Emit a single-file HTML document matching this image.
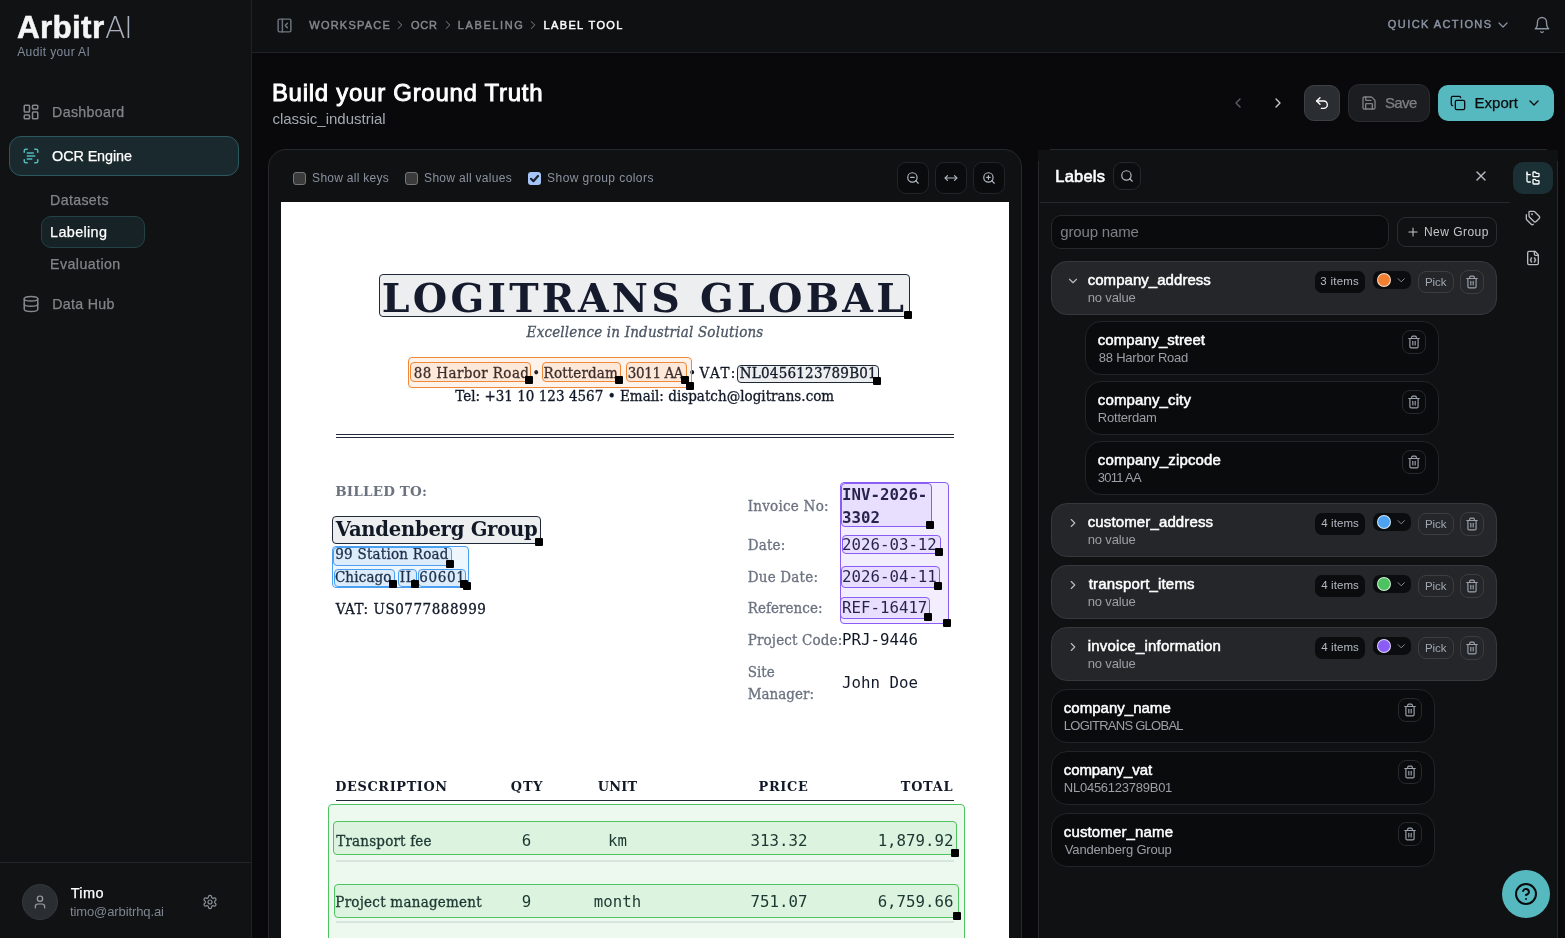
<!DOCTYPE html>
<html lang="en">
<head>
<meta charset="utf-8">
<title>ArbitrAI - Label Tool</title>
<style>
*{box-sizing:border-box;margin:0;padding:0}
html,body{width:1565px;height:938px;overflow:hidden;background:#09090b;color:#fff;font-family:"Liberation Sans",sans-serif;font-size:15px;-webkit-font-smoothing:antialiased}
#app{position:absolute;left:0;top:0;width:1565px;height:938px;overflow:hidden;will-change:transform}
.abs{position:absolute}
svg.i{position:absolute;fill:none;stroke:currentColor;stroke-width:2;stroke-linecap:round;stroke-linejoin:round}
.t{position:absolute;white-space:nowrap;line-height:1}
/* sidebar */
#sidebar{position:absolute;left:0;top:0;width:252px;height:938px;background:#111214;border-right:1px solid #202226}
#topbar{position:absolute;left:252px;top:0;width:1313px;height:53px;background:#0f1012;border-bottom:1px solid #202226}
#main{position:absolute;left:252px;top:53px;width:1313px;height:885px;background:#09090b}
.pill{position:absolute;border:1px solid #2a5a5e;background:#1a292d;border-radius:12px}
/* doc */
#docpanel{position:absolute;left:268px;top:149px;width:754px;height:820px;background:#101113;border:1px solid #26282c;border-radius:18px}
#page{position:absolute;left:281px;top:202px;width:728px;height:736px;background:#fff;color:#111827;font-family:"Liberation Serif",serif;overflow:hidden}
.box{position:absolute;border:1px solid;border-radius:4px;z-index:2}
.h{position:absolute;width:8px;height:8px;background:#000;border-radius:1px;z-index:3}
.mono{font-family:"DejaVu Sans Mono","Liberation Mono",monospace;font-size:16px}
/* labels */
#labels{position:absolute;left:1038px;top:150px;width:520px;height:820px;background:#101113}
.g{position:absolute;left:1051px;width:446px;height:54px;background:#242629;border:1px solid #36383c;border-radius:16px}
.it{position:absolute;height:54px;background:#0a0b0d;border:1px solid #222428;border-radius:16px}
.badge{position:absolute;background:#0b0c0e;border-radius:7px;color:#b4b7bc;font-size:12px;text-align:center}
.btn{position:absolute;border:1px solid #3a3d42;border-radius:8px;color:#a9acb1}
.it .btn{border-color:#26282c}
</style>
</head>
<body>
<div id="app">
<aside>
<div id="sidebar"></div>
<div class="t" style="left:16.90px;top:8.80px;font-size:31.5px;line-height:37.80px;color:#f5f5f5;font-weight:700;letter-spacing:0.300px;-webkit-text-stroke:0.5px currentColor;">Arbitr</div>
<div class="t" style="left:104.90px;top:10.20px;font-size:30px;line-height:36.00px;color:#aab2c0;font-weight:200;font-family:'DejaVu Sans',sans-serif;letter-spacing:-1.500px;">AI</div>
<div class="t" style="left:17.20px;top:44.80px;font-size:12px;line-height:14.40px;color:#808a9a;font-weight:400;letter-spacing:0.383px;">Audit your AI</div>
<svg class="i" viewBox="0 0 24 24" width="18" height="18" style="left:22.0px;top:103.0px;color:#85878b;stroke-width:2"><rect width="7" height="9" x="3" y="3" rx="1"/><rect width="7" height="5" x="14" y="3" rx="1"/><rect width="7" height="9" x="14" y="12" rx="1"/><rect width="7" height="5" x="3" y="16" rx="1"/></svg>
<div class="t" style="left:52.10px;top:103.68px;font-size:14.2px;line-height:17.04px;color:#828487;font-weight:400;letter-spacing:0.337px;-webkit-text-stroke:0.25px currentColor;">Dashboard</div>
<div class="pill" style="left:9px;top:136px;width:230px;height:40px"></div>
<svg class="i" viewBox="0 0 24 24" width="18" height="18" style="left:22.0px;top:147.0px;color:#4fb9bd;stroke-width:2"><path d="M3 7V5a2 2 0 0 1 2-2h2"/><path d="M17 3h2a2 2 0 0 1 2 2v2"/><path d="M21 17v2a2 2 0 0 1-2 2h-2"/><path d="M7 21H5a2 2 0 0 1-2-2v-2"/><path d="M7 8h8"/><path d="M7 12h10"/><path d="M7 16h6"/></svg>
<div class="t" style="left:52.10px;top:147.56px;font-size:14.4px;line-height:17.28px;color:#fff;font-weight:400;letter-spacing:-0.111px;-webkit-text-stroke:0.25px currentColor;">OCR Engine</div>
<div class="t" style="left:50.10px;top:191.68px;font-size:14.2px;line-height:17.04px;color:#828487;font-weight:400;letter-spacing:0.343px;-webkit-text-stroke:0.25px currentColor;">Datasets</div>
<div class="pill" style="left:41px;top:216px;width:104px;height:32px;border-radius:10px;background:#162226;border-color:#234347"></div>
<div class="t" style="left:50.10px;top:223.56px;font-size:14.4px;line-height:17.28px;color:#fff;font-weight:400;letter-spacing:0.343px;-webkit-text-stroke:0.25px currentColor;">Labeling</div>
<div class="t" style="left:50.10px;top:255.68px;font-size:14.2px;line-height:17.04px;color:#828487;font-weight:400;letter-spacing:0.433px;-webkit-text-stroke:0.25px currentColor;">Evaluation</div>
<svg class="i" viewBox="0 0 24 24" width="18" height="18" style="left:22.0px;top:295.0px;color:#85878b;stroke-width:2"><ellipse cx="12" cy="5" rx="9" ry="3"/><path d="M3 5V19A9 3 0 0 0 21 19V5"/><path d="M3 12A9 3 0 0 0 21 12"/></svg>
<div class="t" style="left:52.20px;top:295.68px;font-size:14.2px;line-height:17.04px;color:#828487;font-weight:400;letter-spacing:0.314px;-webkit-text-stroke:0.25px currentColor;">Data Hub</div>
<div class="abs" style="left:0;top:862px;width:251px;height:1px;background:#232529"></div>
<div class="abs" style="left:22px;top:884px;width:36px;height:36px;border-radius:50%;background:#2a2d31;border:1px solid #35383d"></div>
<svg class="i" viewBox="0 0 24 24" width="16" height="16" style="left:32.0px;top:894.0px;color:#9da0a5;stroke-width:1.8"><path d="M19 21v-2a4 4 0 0 0-4-4H9a4 4 0 0 0-4 4v2"/><circle cx="12" cy="7" r="4"/></svg>
<div class="t" style="left:70.70px;top:885.30px;font-size:14.5px;line-height:17.40px;color:#fff;font-weight:400;letter-spacing:0.367px;-webkit-text-stroke:0.25px currentColor;">Timo</div>
<div class="t" style="left:69.90px;top:904.20px;font-size:13px;line-height:15.60px;color:#7d8592;font-weight:400;letter-spacing:-0.100px;">timo@arbitrhq.ai</div>
<svg class="i" viewBox="0 0 24 24" width="16" height="16" style="left:202.0px;top:894.0px;color:#8a8f98;stroke-width:1.8"><path d="M12.22 2h-.44a2 2 0 0 0-2 2v.18a2 2 0 0 1-1 1.73l-.43.25a2 2 0 0 1-2 0l-.15-.08a2 2 0 0 0-2.73.73l-.22.38a2 2 0 0 0 .73 2.73l.15.1a2 2 0 0 1 1 1.72v.51a2 2 0 0 1-1 1.74l-.15.09a2 2 0 0 0-.73 2.73l.22.38a2 2 0 0 0 2.73.73l.15-.08a2 2 0 0 1 2 0l.43.25a2 2 0 0 1 1 1.73V20a2 2 0 0 0 2 2h.44a2 2 0 0 0 2-2v-.18a2 2 0 0 1 1-1.73l.43-.25a2 2 0 0 1 2 0l.15.08a2 2 0 0 0 2.73-.73l.22-.39a2 2 0 0 0-.73-2.73l-.15-.08a2 2 0 0 1-1-1.74v-.5a2 2 0 0 1 1-1.74l.15-.09a2 2 0 0 0 .73-2.73l-.22-.38a2 2 0 0 0-2.73-.73l-.15.08a2 2 0 0 1-2 0l-.43-.25a2 2 0 0 1-1-1.73V4a2 2 0 0 0-2-2z"/><circle cx="12" cy="12" r="3"/></svg>
</aside>
<header>
<div id="topbar"></div>
<svg class="i" viewBox="0 0 24 24" width="17" height="17" style="left:275.5px;top:16.5px;color:#6f7680;stroke-width:2"><rect width="18" height="18" x="3" y="3" rx="2"/><path d="M9 3v18"/><path d="m16 15-3-3 3-3"/></svg>
<div class="t" style="left:309.30px;top:19.10px;font-size:11px;line-height:13.20px;color:#85878b;font-weight:400;letter-spacing:1.225px;-webkit-text-stroke:0.45px currentColor;">WORKSPACE</div>
<svg class="i" viewBox="0 0 24 24" width="14" height="14" style="left:393.3px;top:18.2px;color:#6b6e73;stroke-width:1.8"><path d="m9 18 6-6-6-6"/></svg>
<div class="t" style="left:411.00px;top:19.10px;font-size:11px;line-height:13.20px;color:#85878b;font-weight:400;letter-spacing:0.700px;-webkit-text-stroke:0.45px currentColor;">OCR</div>
<svg class="i" viewBox="0 0 24 24" width="14" height="14" style="left:441.3px;top:18.2px;color:#6b6e73;stroke-width:1.8"><path d="m9 18 6-6-6-6"/></svg>
<div class="t" style="left:457.80px;top:19.10px;font-size:11px;line-height:13.20px;color:#85878b;font-weight:400;letter-spacing:1.600px;-webkit-text-stroke:0.45px currentColor;">LABELING</div>
<svg class="i" viewBox="0 0 24 24" width="14" height="14" style="left:526.2px;top:18.2px;color:#6b6e73;stroke-width:1.8"><path d="m9 18 6-6-6-6"/></svg>
<div class="t" style="left:543.40px;top:19.10px;font-size:11px;line-height:13.20px;color:#fff;font-weight:400;letter-spacing:1.400px;-webkit-text-stroke:0.45px currentColor;">LABEL TOOL</div>
<div class="t" style="left:1387.80px;top:18.00px;font-size:11px;line-height:13.20px;color:#8a93a2;font-weight:400;letter-spacing:1.425px;-webkit-text-stroke:0.45px currentColor;">QUICK ACTIONS</div>
<svg class="i" viewBox="0 0 24 24" width="16" height="16" style="left:1495.0px;top:16.5px;color:#8a93a2;stroke-width:1.8"><path d="m6 9 6 6 6-6"/></svg>
<svg class="i" viewBox="0 0 24 24" width="18" height="18" style="left:1533.0px;top:16.0px;color:#8a93a2;stroke-width:1.8"><path d="M6 8a6 6 0 0 1 12 0c0 7 3 9 3 9H3s3-2 3-9"/><path d="M10.3 21a1.94 1.94 0 0 0 3.4 0"/></svg>
</header>
<main>
<div id="main"></div>
<section>
<div class="t" style="left:271.90px;top:78.70px;font-size:24px;line-height:28.80px;color:#fff;font-weight:400;letter-spacing:0.723px;-webkit-text-stroke:0.9px currentColor;">Build your Ground Truth</div>
<div class="t" style="left:272.40px;top:110.30px;font-size:15px;line-height:18.00px;color:#a3a9b2;font-weight:400;letter-spacing:-0.006px;">classic_industrial</div>
<svg class="i" viewBox="0 0 24 24" width="16" height="16" style="left:1230.0px;top:95.0px;color:#5d6066;stroke-width:2"><path d="m15 18-6-6 6-6"/></svg>
<svg class="i" viewBox="0 0 24 24" width="16" height="16" style="left:1269.7px;top:95.0px;color:#c9cbce;stroke-width:2"><path d="m9 18 6-6-6-6"/></svg>
<div class="abs" style="left:1304px;top:85px;width:36px;height:36px;border-radius:10px;background:#2a2d31;border:1px solid #3d4045"></div>
<svg class="i" viewBox="0 0 24 24" width="16" height="16" style="left:1314.0px;top:95.0px;color:#fff;stroke-width:2"><path d="M9 14 4 9l5-5"/><path d="M4 9h10.5a5.5 5.5 0 0 1 5.5 5.5a5.5 5.5 0 0 1-5.5 5.5H11"/></svg>
<div class="abs" style="left:1348px;top:84px;width:82px;height:38px;border-radius:11px;background:#1b1d20;border:1px solid #2a2c30"></div>
<svg class="i" viewBox="0 0 24 24" width="16" height="16" style="left:1361.0px;top:95.0px;color:#7d8085;stroke-width:2"><path d="M15.2 3a2 2 0 0 1 1.4.6l3.8 3.8a2 2 0 0 1 .6 1.4V19a2 2 0 0 1-2 2H5a2 2 0 0 1-2-2V5a2 2 0 0 1 2-2z"/><path d="M17 21v-7a1 1 0 0 0-1-1H8a1 1 0 0 0-1 1v7"/><path d="M7 3v4a1 1 0 0 0 1 1h7"/></svg>
<div class="t" style="left:1384.90px;top:94.00px;font-size:15px;line-height:18.00px;color:#7d8085;font-weight:400;letter-spacing:-0.567px;-webkit-text-stroke:0.25px currentColor;">Save</div>
<div class="abs" style="left:1438px;top:85px;width:116px;height:36px;border-radius:10px;background:#57b9c0"></div>
<svg class="i" viewBox="0 0 24 24" width="16" height="16" style="left:1450.0px;top:95.0px;color:#0a0b0d;stroke-width:2"><rect width="14" height="14" x="8" y="8" rx="2" ry="2"/><path d="M4 16c-1.1 0-2-.9-2-2V4c0-1.1.9-2 2-2h10c1.1 0 2 .9 2 2"/></svg>
<div class="t" style="left:1474.50px;top:94.00px;font-size:15px;line-height:18.00px;color:#0a0b0d;font-weight:400;letter-spacing:0.020px;-webkit-text-stroke:0.25px currentColor;">Export</div>
<svg class="i" viewBox="0 0 24 24" width="16" height="16" style="left:1526.2px;top:95.0px;color:#0a0b0d;stroke-width:2"><path d="m6 9 6 6 6-6"/></svg>
<div class="abs" style="left:1502px;top:870px;width:48px;height:48px;border-radius:50%;background:#57b9c0;z-index:50"></div>
<svg class="i" viewBox="0 0 24 24" width="24" height="24" style="left:1514.0px;top:882.0px;color:#0a0b0d;stroke-width:2;z-index:51"><circle cx="12" cy="12" r="10"/><path d="M9.09 9a3 3 0 0 1 5.83 1c0 2-3 3-3 3"/><path d="M12 17h.01"/></svg>
</section>
<section>
<div id="docpanel"></div>
<div class="abs" style="left:293px;top:172px;width:13px;height:13px;border-radius:3px;background:#3b3b3b;border:1px solid #767676"></div>
<div class="t" style="left:312.10px;top:170.80px;font-size:12px;line-height:14.40px;color:#8a92a0;font-weight:400;letter-spacing:0.283px;">Show all keys</div>
<div class="abs" style="left:405px;top:172px;width:13px;height:13px;border-radius:3px;background:#3b3b3b;border:1px solid #767676"></div>
<div class="t" style="left:424.10px;top:170.80px;font-size:12px;line-height:14.40px;color:#8a92a0;font-weight:400;letter-spacing:0.300px;">Show all values</div>
<div class="abs" style="left:528px;top:172px;width:13px;height:13px;border-radius:3px;background:#a6c5f7"></div>
<svg class="i" viewBox="0 0 13 13" width="13" height="13" style="left:528px;top:172px;color:#1b2230;stroke-width:2.2"><path d="M3 6.8l2.4 2.4L10 4"/></svg>
<div class="t" style="left:547.10px;top:170.80px;font-size:12px;line-height:14.40px;color:#8a92a0;font-weight:400;letter-spacing:0.431px;">Show group colors</div>
<div class="abs" style="left:897px;top:162px;width:32px;height:32px;border-radius:9px;background:#0a0b0d;border:1px solid #222428"></div>
<svg class="i" viewBox="0 0 24 24" width="14" height="14" style="left:906.0px;top:171.0px;color:#b4bac4;stroke-width:2"><circle cx="11" cy="11" r="8"/><path d="M21 21l-4.35-4.35"/><path d="M8 11h6"/></svg>
<div class="abs" style="left:935px;top:162px;width:32px;height:32px;border-radius:9px;background:#0a0b0d;border:1px solid #222428"></div>
<svg class="i" viewBox="0 0 24 24" width="14" height="14" style="left:944.0px;top:171.0px;color:#b4bac4;stroke-width:2"><path d="m18 8 4 4-4 4"/><path d="M2 12h20"/><path d="m6 8-4 4 4 4"/></svg>
<div class="abs" style="left:973px;top:162px;width:32px;height:32px;border-radius:9px;background:#0a0b0d;border:1px solid #222428"></div>
<svg class="i" viewBox="0 0 24 24" width="14" height="14" style="left:982.0px;top:171.0px;color:#b4bac4;stroke-width:2"><circle cx="11" cy="11" r="8"/><path d="M21 21l-4.35-4.35"/><path d="M8 11h6"/><path d="M11 8v6"/></svg>
<div id="page"></div>
<div class="box" style="left:379px;top:274px;width:531px;height:43px;border-color:#1f2937;background:rgba(31,41,55,0.08);border-radius:4px;"></div>
<div class="t" style="left:381.80px;top:274.50px;font-size:39.5px;line-height:47.40px;color:#151a2d;font-weight:700;font-family:'DejaVu Serif',serif;letter-spacing:3.253px;">LOGITRANS GLOBAL</div>
<div class="h" style="left:904px;top:311px"></div>
<div class="t" style="left:526.60px;top:323.00px;font-size:15px;line-height:18.00px;color:#4b5563;font-weight:400;font-style:italic;font-family:'DejaVu Serif Condensed',serif;letter-spacing:0.191px;-webkit-text-stroke:0.3px currentColor;">Excellence in Industrial Solutions</div>
<div class="box" style="left:408px;top:357px;width:284px;height:31px;border-color:#f0883a;background:rgba(245,137,59,0.1);border-radius:4px;"></div>
<div class="box" style="left:410px;top:362px;width:121px;height:20px;border-color:#f0883a;background:rgba(245,137,59,0.1);border-radius:4px;"></div>
<div class="box" style="left:542px;top:362px;width:79px;height:20px;border-color:#f0883a;background:rgba(245,137,59,0.1);border-radius:4px;"></div>
<div class="box" style="left:626px;top:362px;width:61px;height:20px;border-color:#f0883a;background:rgba(245,137,59,0.1);border-radius:4px;"></div>
<div class="t" style="left:413.70px;top:364.00px;font-size:15px;line-height:18.00px;color:#111827;font-weight:400;font-family:'DejaVu Serif Condensed',serif;letter-spacing:0.392px;-webkit-text-stroke:0.3px currentColor;">88 Harbor Road</div>
<div class="t " style="left:536.2px;transform:translateX(-50%);top:364.00px;font-size:15px;line-height:18.00px;color:#111827;font-weight:400;font-family:'DejaVu Serif Condensed',serif">&bull;</div>
<div class="t" style="left:543.60px;top:364.00px;font-size:15px;line-height:18.00px;color:#111827;font-weight:400;font-family:'DejaVu Serif Condensed',serif;letter-spacing:0.150px;-webkit-text-stroke:0.3px currentColor;">Rotterdam</div>
<div class="t" style="left:627.80px;top:364.00px;font-size:15px;line-height:18.00px;color:#111827;font-weight:400;font-family:'DejaVu Serif Condensed',serif;letter-spacing:-0.383px;-webkit-text-stroke:0.3px currentColor;">3011 AA</div>
<div class="t " style="left:692.3px;transform:translateX(-50%);top:364.00px;font-size:15px;line-height:18.00px;color:#111827;font-weight:400;font-family:'DejaVu Serif Condensed',serif">&bull;</div>
<div class="t" style="left:699.60px;top:364.00px;font-size:15px;line-height:18.00px;color:#111827;font-weight:400;font-family:'DejaVu Serif Condensed',serif;letter-spacing:1.667px;-webkit-text-stroke:0.3px currentColor;">VAT:</div>
<div class="box" style="left:737px;top:365px;width:142px;height:18px;border-color:#1f2937;background:rgba(31,41,55,0.08);border-radius:4px;"></div>
<div class="t" style="left:739.80px;top:364.00px;font-size:15px;line-height:18.00px;color:#111827;font-weight:400;font-family:'DejaVu Serif Condensed',serif;letter-spacing:0.229px;-webkit-text-stroke:0.3px currentColor;">NL0456123789B01</div>
<div class="h" style="left:525px;top:376px"></div>
<div class="h" style="left:615px;top:376px"></div>
<div class="h" style="left:681px;top:376px"></div>
<div class="h" style="left:686px;top:382px"></div>
<div class="h" style="left:873px;top:377px"></div>
<div class="t" style="left:455.30px;top:387.00px;font-size:15px;line-height:18.00px;color:#111827;font-weight:400;font-family:'DejaVu Serif Condensed',serif;letter-spacing:0.024px;-webkit-text-stroke:0.3px currentColor;">Tel: +31 10 123 4567 &bull; Email: dispatch@logitrans.com</div>
<div class="abs" style="left:335.5px;top:434px;width:618px;height:4px;border-top:1.5px solid #1f2937;border-bottom:1.5px solid #1f2937"></div>
<div class="t" style="left:335.30px;top:482.90px;font-size:13.5px;line-height:16.20px;color:#6b7280;font-weight:700;font-family:'DejaVu Serif',serif;letter-spacing:0.167px;">BILLED TO:</div>
<div class="box" style="left:332px;top:516px;width:209px;height:28px;border-color:#1f2937;background:rgba(31,41,55,0.08);border-radius:4px;"></div>
<div class="t" style="left:335.80px;top:517.64px;font-size:19.6px;line-height:23.52px;color:#111827;font-weight:700;font-family:'DejaVu Serif',serif;letter-spacing:-0.267px;">Vandenberg Group</div>
<div class="h" style="left:535px;top:538px"></div>
<div class="box" style="left:332px;top:546px;width:137px;height:42px;border-color:#4a9ff0;background:rgba(74,159,240,0.1);border-radius:4px;"></div>
<div class="box" style="left:333px;top:547px;width:119px;height:19px;border-color:#4a9ff0;background:rgba(74,159,240,0.1);border-radius:4px;"></div>
<div class="t" style="left:335.30px;top:545.40px;font-size:15px;line-height:18.00px;color:#111827;font-weight:400;font-family:'DejaVu Serif Condensed',serif;letter-spacing:0.229px;-webkit-text-stroke:0.3px currentColor;">99 Station Road</div>
<div class="box" style="left:334px;top:569px;width:61px;height:18px;border-color:#4a9ff0;background:rgba(74,159,240,0.1);border-radius:4px;"></div>
<div class="t" style="left:334.90px;top:568.00px;font-size:15px;line-height:18.00px;color:#111827;font-weight:400;font-family:'DejaVu Serif Condensed',serif;letter-spacing:0.150px;-webkit-text-stroke:0.3px currentColor;">Chicago</div>
<div class="box" style="left:398px;top:569px;width:19px;height:18px;border-color:#4a9ff0;background:rgba(74,159,240,0.1);border-radius:4px;"></div>
<div class="t" style="left:399.80px;top:568.00px;font-size:15px;line-height:18.00px;color:#111827;font-weight:400;font-family:'DejaVu Serif Condensed',serif;letter-spacing:0.700px;-webkit-text-stroke:0.3px currentColor;">IL</div>
<div class="box" style="left:418px;top:569px;width:48px;height:18px;border-color:#4a9ff0;background:rgba(74,159,240,0.1);border-radius:4px;"></div>
<div class="t" style="left:419.30px;top:568.00px;font-size:15px;line-height:18.00px;color:#111827;font-weight:400;font-family:'DejaVu Serif Condensed',serif;letter-spacing:0.675px;-webkit-text-stroke:0.3px currentColor;">60601</div>
<div class="h" style="left:446px;top:560px"></div>
<div class="h" style="left:389px;top:580px"></div>
<div class="h" style="left:411px;top:580px"></div>
<div class="h" style="left:460px;top:580px"></div>
<div class="h" style="left:463px;top:582px"></div>
<div class="t" style="left:335.80px;top:600.00px;font-size:15px;line-height:18.00px;color:#111827;font-weight:400;font-family:'DejaVu Serif Condensed',serif;letter-spacing:0.544px;-webkit-text-stroke:0.3px currentColor;">VAT: US0777888999</div>
<div class="box" style="left:840px;top:482px;width:109px;height:142px;border-color:#8b5cf6;background:rgba(139,92,246,0.1);border-radius:4px;"></div>
<div class="box" style="left:841px;top:483px;width:91px;height:44px;border-color:#8b5cf6;background:rgba(139,92,246,0.1);border-radius:4px;"></div>
<div class="box" style="left:842px;top:535px;width:99px;height:19px;border-color:#8b5cf6;background:rgba(139,92,246,0.1);border-radius:4px;"></div>
<div class="box" style="left:841px;top:566px;width:99px;height:22px;border-color:#8b5cf6;background:rgba(139,92,246,0.1);border-radius:4px;"></div>
<div class="box" style="left:840px;top:597px;width:90px;height:22px;border-color:#8b5cf6;background:rgba(139,92,246,0.1);border-radius:4px;"></div>
<div class="t" style="left:747.70px;top:497.00px;font-size:15px;line-height:18.00px;color:#6b7280;font-weight:400;font-family:'DejaVu Serif Condensed',serif;letter-spacing:0.250px;-webkit-text-stroke:0.3px currentColor;">Invoice No:</div>
<div class="t" style="left:747.70px;top:536.00px;font-size:15px;line-height:18.00px;color:#6b7280;font-weight:400;font-family:'DejaVu Serif Condensed',serif;letter-spacing:0.175px;-webkit-text-stroke:0.3px currentColor;">Date:</div>
<div class="t" style="left:747.70px;top:568.00px;font-size:15px;line-height:18.00px;color:#6b7280;font-weight:400;font-family:'DejaVu Serif Condensed',serif;letter-spacing:0.213px;-webkit-text-stroke:0.3px currentColor;">Due Date:</div>
<div class="t" style="left:747.70px;top:599.00px;font-size:15px;line-height:18.00px;color:#6b7280;font-weight:400;font-family:'DejaVu Serif Condensed',serif;letter-spacing:0.056px;-webkit-text-stroke:0.3px currentColor;">Reference:</div>
<div class="t" style="left:747.70px;top:631.00px;font-size:15px;line-height:18.00px;color:#6b7280;font-weight:400;font-family:'DejaVu Serif Condensed',serif;letter-spacing:0.158px;-webkit-text-stroke:0.3px currentColor;">Project Code:</div>
<div class="t mono" style="left:842px;top:484.05px;width:90px;white-space:normal;font-size:15.75px;line-height:22.9px;color:#111827;font-weight:700">INV-2026-3302</div>
<div class="t" style="left:747.7px;top:660.9px;width:70px;white-space:normal;font-size:15px;line-height:22.4px;color:#6b7280;font-family:'DejaVu Serif Condensed',serif;letter-spacing:0.02px;-webkit-text-stroke:0.3px currentColor">Site Manager:</div>
<div class="t mono" style="left:842px;top:535.55px;font-size:15.75px;line-height:18.90px;color:#111827;font-weight:400;">2026-03-12</div>
<div class="t mono" style="left:842px;top:567.55px;font-size:15.75px;line-height:18.90px;color:#111827;font-weight:400;">2026-04-11</div>
<div class="t mono" style="left:842px;top:598.55px;font-size:15.75px;line-height:18.90px;color:#111827;font-weight:400;">REF-16417</div>
<div class="t mono" style="left:842px;top:630.55px;font-size:15.75px;line-height:18.90px;color:#111827;font-weight:400;">PRJ-9446</div>
<div class="t mono" style="left:842px;top:673.55px;font-size:15.75px;line-height:18.90px;color:#111827;font-weight:400;">John Doe</div>
<div class="h" style="left:926px;top:521px"></div>
<div class="h" style="left:935px;top:548px"></div>
<div class="h" style="left:934px;top:582px"></div>
<div class="h" style="left:924px;top:613px"></div>
<div class="h" style="left:943px;top:618.5px"></div>
<div class="t" style="left:335.30px;top:779.26px;font-size:12.9px;line-height:15.48px;color:#111827;font-weight:700;font-family:'DejaVu Serif',serif;letter-spacing:0.620px;">DESCRIPTION</div>
<div class="t" style="left:510.80px;top:779.26px;font-size:12.9px;line-height:15.48px;color:#111827;font-weight:700;font-family:'DejaVu Serif',serif;letter-spacing:0.850px;">QTY</div>
<div class="t" style="left:597.80px;top:779.26px;font-size:12.9px;line-height:15.48px;color:#111827;font-weight:700;font-family:'DejaVu Serif',serif;letter-spacing:0.233px;">UNIT</div>
<div class="t" style="left:758.50px;top:779.26px;font-size:12.9px;line-height:15.48px;color:#111827;font-weight:700;font-family:'DejaVu Serif',serif;letter-spacing:0.700px;">PRICE</div>
<div class="t" style="left:900.80px;top:779.26px;font-size:12.9px;line-height:15.48px;color:#111827;font-weight:700;font-family:'DejaVu Serif',serif;letter-spacing:0.750px;">TOTAL</div>
<div class="abs" style="left:335.5px;top:800px;width:618px;height:1px;background:#1f2937"></div>
<div class="box" style="left:328px;top:804px;width:637px;height:156px;border-color:#4fc35f;background:rgba(79,195,95,0.1);border-radius:4px;"></div>
<div class="abs" style="left:335.5px;top:860px;width:618px;height:1.5px;background:#e6e9ec"></div>
<div class="abs" style="left:335.5px;top:921px;width:618px;height:1.5px;background:#e6e9ec"></div>
<div class="box" style="left:333px;top:821px;width:624px;height:34px;border-color:#4fc35f;background:rgba(79,195,95,0.1);border-radius:4px;"></div>
<div class="box" style="left:334px;top:884px;width:625px;height:34px;border-color:#4fc35f;background:rgba(79,195,95,0.1);border-radius:4px;"></div>
<div class="t" style="left:336.30px;top:832.00px;font-size:15px;line-height:18.00px;color:#111827;font-weight:400;font-family:'DejaVu Serif Condensed',serif;letter-spacing:0.183px;-webkit-text-stroke:0.3px currentColor;">Transport fee</div>
<div class="t mono" style="left:526.5px;transform:translateX(-50%);top:831.55px;font-size:15.75px;line-height:18.90px;color:#111827;font-weight:400;">6</div>
<div class="t mono" style="left:617.5px;transform:translateX(-50%);top:831.55px;font-size:15.75px;line-height:18.90px;color:#111827;font-weight:400;">km</div>
<div class="t mono" style="right:757.5px;top:831.55px;font-size:15.75px;line-height:18.90px;color:#111827;font-weight:400;">313.32</div>
<div class="t mono" style="right:611.5px;top:831.55px;font-size:15.75px;line-height:18.90px;color:#111827;font-weight:400;">1,879.92</div>
<div class="t" style="left:335.30px;top:893.00px;font-size:15px;line-height:18.00px;color:#111827;font-weight:400;font-family:'DejaVu Serif Condensed',serif;letter-spacing:0.247px;-webkit-text-stroke:0.3px currentColor;">Project management</div>
<div class="t mono" style="left:526.5px;transform:translateX(-50%);top:892.55px;font-size:15.75px;line-height:18.90px;color:#111827;font-weight:400;">9</div>
<div class="t mono" style="left:617.5px;transform:translateX(-50%);top:892.55px;font-size:15.75px;line-height:18.90px;color:#111827;font-weight:400;">month</div>
<div class="t mono" style="right:757.5px;top:892.55px;font-size:15.75px;line-height:18.90px;color:#111827;font-weight:400;">751.07</div>
<div class="t mono" style="right:611.5px;top:892.55px;font-size:15.75px;line-height:18.90px;color:#111827;font-weight:400;">6,759.66</div>
<div class="h" style="left:951px;top:849px"></div>
<div class="h" style="left:953px;top:912px"></div>
</section>
<section>
<div id="labels"></div>
<div class="abs" style="left:1050px;top:149px;width:497px;height:1px;background:#26282c"></div>
<div class="abs" style="left:1038px;top:161px;width:1px;height:800px;background:#26282c"></div>
<div class="abs" style="left:1557px;top:161px;width:1px;height:800px;background:#26282c"></div>
<div class="t" style="left:1055.30px;top:167.20px;font-size:16.5px;line-height:19.80px;color:#fff;font-weight:400;letter-spacing:0.200px;-webkit-text-stroke:0.6px currentColor;">Labels</div>
<div class="abs" style="left:1113px;top:162px;width:28px;height:28px;border-radius:9px;background:#0c0d0f;border:1px solid #26282c"></div>
<svg class="i" viewBox="0 0 24 24" width="14" height="14" style="left:1120.0px;top:169.0px;color:#b4bac4;stroke-width:2"><circle cx="11" cy="11" r="8"/><path d="m21 21-4.3-4.3"/></svg>
<svg class="i" viewBox="0 0 24 24" width="16" height="16" style="left:1473.0px;top:168.0px;color:#b4bac4;stroke-width:2"><path d="M18 6 6 18"/><path d="m6 6 12 12"/></svg>
<div class="abs" style="left:1040px;top:202px;width:470px;height:1px;background:#26282c"></div>
<div class="abs" style="left:1051px;top:215px;width:338px;height:34px;border-radius:10px;background:#0a0b0d;border:1px solid #26282c"></div>
<div class="t" style="left:1060.30px;top:223.00px;font-size:15px;line-height:18.00px;color:#7d8085;font-weight:400;letter-spacing:-0.167px;">group name</div>
<div class="abs" style="left:1397px;top:217px;width:100px;height:30px;border-radius:9px;border:1px solid #2b2d31"></div>
<svg class="i" viewBox="0 0 24 24" width="14" height="14" style="left:1406.0px;top:225.0px;color:#c4c6c9;stroke-width:1.8"><path d="M5 12h14"/><path d="M12 5v14"/></svg>
<div class="t" style="left:1423.90px;top:224.80px;font-size:12px;line-height:14.40px;color:#c4c6c9;font-weight:400;letter-spacing:0.475px;">New Group</div>
<div class="abs" style="left:1513px;top:162px;width:40px;height:32px;border-radius:10px;background:#1b3035"></div>
<svg class="i" viewBox="0 0 24 24" width="16" height="16" style="left:1525.0px;top:170.0px;color:#fff;stroke-width:2"><path d="M20 10a1 1 0 0 0 1-1V6a1 1 0 0 0-1-1h-2.5a1 1 0 0 1-.8-.4l-.9-1.2A1 1 0 0 0 15 3h-2a1 1 0 0 0-1 1v5a1 1 0 0 0 1 1Z"/><path d="M20 21a1 1 0 0 0 1-1v-3a1 1 0 0 0-1-1h-2.9a1 1 0 0 1-.88-.55l-.42-.85a1 1 0 0 0-.92-.6H13a1 1 0 0 0-1 1v5a1 1 0 0 0 1 1Z"/><path d="M3 5a2 2 0 0 0 2 2h3"/><path d="M3 3v13a2 2 0 0 0 2 2h3"/></svg>
<svg class="i" viewBox="0 0 24 24" width="16" height="16" style="left:1525.0px;top:210.0px;color:#b7babe;stroke-width:2"><path d="M13.172 2a2 2 0 0 1 1.414.586l6.71 6.71a2.4 2.4 0 0 1 0 3.408l-4.592 4.592a2.4 2.4 0 0 1-3.408 0l-6.71-6.71A2 2 0 0 1 6 9.172V3a1 1 0 0 1 1-1z"/><path d="M2 7v6.172a2 2 0 0 0 .586 1.414l6.71 6.71a2.4 2.4 0 0 0 3.191.193"/><circle cx="10.5" cy="6.5" r=".5" fill="currentColor"/></svg>
<svg class="i" viewBox="0 0 24 24" width="16" height="16" style="left:1525.0px;top:250.0px;color:#b7babe;stroke-width:2"><path d="M15 2H6a2 2 0 0 0-2 2v16a2 2 0 0 0 2 2h12a2 2 0 0 0 2-2V7Z"/><path d="M14 2v4a2 2 0 0 0 2 2h4"/><path d="M10 12a1 1 0 0 0-1 1v1a1 1 0 0 1-1 1 1 1 0 0 1 1 1v1a1 1 0 0 0 1 1"/><path d="M14 18a1 1 0 0 0 1-1v-1a1 1 0 0 1 1-1 1 1 0 0 1-1-1v-1a1 1 0 0 0-1-1"/></svg>
<div class="g" style="top:261px"></div>
<svg class="i" viewBox="0 0 24 24" width="14" height="14" style="left:1066.0px;top:274.0px;color:#b7babe;stroke-width:2"><path d="m6 9 6 6 6-6"/></svg>
<div class="t" style="left:1087.70px;top:271.20px;font-size:15px;line-height:18.00px;color:#fff;font-weight:400;letter-spacing:0.043px;-webkit-text-stroke:0.5px currentColor;">company_address</div>
<div class="t" style="left:1087.70px;top:290.20px;font-size:13px;line-height:15.60px;color:#9c9fa6;font-weight:400;letter-spacing:-0.143px;">no value</div>
<div class="badge" style="left:1315px;top:271px;width:50px;height:22px"></div>
<div class="t" style="left:1320.30px;top:275.40px;font-size:11.5px;line-height:13.80px;color:#b3b9c4;font-weight:400;letter-spacing:0.250px;">3 items</div>
<div class="badge" style="left:1373px;top:271px;width:38px;height:18px;border-radius:7px"></div>
<div class="abs" style="left:1377px;top:273px;width:14px;height:14px;border-radius:50%;background:#f08030;border:1px solid rgba(255,255,255,0.75)"></div>
<svg class="i" viewBox="0 0 24 24" width="12.5" height="12.5" style="left:1394.75px;top:273.75px;color:#9097a2;stroke-width:1.8"><path d="m6 9 6 6 6-6"/></svg>
<div class="btn" style="left:1418px;top:271px;width:36px;height:22px"></div>
<div class="t" style="left:1425.00px;top:276.10px;font-size:11.5px;line-height:13.80px;color:#a0a7b3;font-weight:400;letter-spacing:-0.067px;">Pick</div>
<div class="btn" style="left:1460px;top:270px;width:24px;height:24px"></div>
<svg class="i" viewBox="0 0 24 24" width="14" height="14" style="left:1465.0px;top:275.0px;color:#9aa1ac;stroke-width:2"><path d="M3 6h18"/><path d="M19 6v14c0 1-1 2-2 2H7c-1 0-2-1-2-2V6"/><path d="M8 6V4c0-1 1-2 2-2h4c1 0 2 1 2 2v2"/><path d="M10 11v6"/><path d="M14 11v6"/></svg>
<div class="g" style="top:503px"></div>
<svg class="i" viewBox="0 0 24 24" width="14" height="14" style="left:1066.0px;top:516.0px;color:#b7babe;stroke-width:2"><path d="m9 18 6-6-6-6"/></svg>
<div class="t" style="left:1087.70px;top:513.20px;font-size:15px;line-height:18.00px;color:#fff;font-weight:400;letter-spacing:0.133px;-webkit-text-stroke:0.5px currentColor;">customer_address</div>
<div class="t" style="left:1087.70px;top:532.20px;font-size:13px;line-height:15.60px;color:#9c9fa6;font-weight:400;letter-spacing:-0.143px;">no value</div>
<div class="badge" style="left:1315px;top:513px;width:50px;height:22px"></div>
<div class="t" style="left:1321.30px;top:517.40px;font-size:11.5px;line-height:13.80px;color:#b3b9c4;font-weight:400;letter-spacing:0.083px;">4 items</div>
<div class="badge" style="left:1373px;top:513px;width:38px;height:18px;border-radius:7px"></div>
<div class="abs" style="left:1377px;top:515px;width:14px;height:14px;border-radius:50%;background:#4da3f0;border:1px solid rgba(255,255,255,0.75)"></div>
<svg class="i" viewBox="0 0 24 24" width="12.5" height="12.5" style="left:1394.75px;top:515.75px;color:#9097a2;stroke-width:1.8"><path d="m6 9 6 6 6-6"/></svg>
<div class="btn" style="left:1418px;top:513px;width:36px;height:22px"></div>
<div class="t" style="left:1425.00px;top:518.10px;font-size:11.5px;line-height:13.80px;color:#a0a7b3;font-weight:400;letter-spacing:-0.067px;">Pick</div>
<div class="btn" style="left:1460px;top:512px;width:24px;height:24px"></div>
<svg class="i" viewBox="0 0 24 24" width="14" height="14" style="left:1465.0px;top:517.0px;color:#9aa1ac;stroke-width:2"><path d="M3 6h18"/><path d="M19 6v14c0 1-1 2-2 2H7c-1 0-2-1-2-2V6"/><path d="M8 6V4c0-1 1-2 2-2h4c1 0 2 1 2 2v2"/><path d="M10 11v6"/><path d="M14 11v6"/></svg>
<div class="g" style="top:565px"></div>
<svg class="i" viewBox="0 0 24 24" width="14" height="14" style="left:1066.0px;top:578.0px;color:#b7babe;stroke-width:2"><path d="m9 18 6-6-6-6"/></svg>
<div class="t" style="left:1088.70px;top:575.20px;font-size:15px;line-height:18.00px;color:#fff;font-weight:400;letter-spacing:0.179px;-webkit-text-stroke:0.5px currentColor;">transport_items</div>
<div class="t" style="left:1087.70px;top:594.20px;font-size:13px;line-height:15.60px;color:#9c9fa6;font-weight:400;letter-spacing:-0.143px;">no value</div>
<div class="badge" style="left:1315px;top:575px;width:50px;height:22px"></div>
<div class="t" style="left:1321.30px;top:579.40px;font-size:11.5px;line-height:13.80px;color:#b3b9c4;font-weight:400;letter-spacing:0.083px;">4 items</div>
<div class="badge" style="left:1373px;top:575px;width:38px;height:18px;border-radius:7px"></div>
<div class="abs" style="left:1377px;top:577px;width:14px;height:14px;border-radius:50%;background:#4cc35e;border:1px solid rgba(255,255,255,0.75)"></div>
<svg class="i" viewBox="0 0 24 24" width="12.5" height="12.5" style="left:1394.75px;top:577.75px;color:#9097a2;stroke-width:1.8"><path d="m6 9 6 6 6-6"/></svg>
<div class="btn" style="left:1418px;top:575px;width:36px;height:22px"></div>
<div class="t" style="left:1425.00px;top:580.10px;font-size:11.5px;line-height:13.80px;color:#a0a7b3;font-weight:400;letter-spacing:-0.067px;">Pick</div>
<div class="btn" style="left:1460px;top:574px;width:24px;height:24px"></div>
<svg class="i" viewBox="0 0 24 24" width="14" height="14" style="left:1465.0px;top:579.0px;color:#9aa1ac;stroke-width:2"><path d="M3 6h18"/><path d="M19 6v14c0 1-1 2-2 2H7c-1 0-2-1-2-2V6"/><path d="M8 6V4c0-1 1-2 2-2h4c1 0 2 1 2 2v2"/><path d="M10 11v6"/><path d="M14 11v6"/></svg>
<div class="g" style="top:627px"></div>
<svg class="i" viewBox="0 0 24 24" width="14" height="14" style="left:1066.0px;top:640.0px;color:#b7babe;stroke-width:2"><path d="m9 18 6-6-6-6"/></svg>
<div class="t" style="left:1087.70px;top:637.20px;font-size:15px;line-height:18.00px;color:#fff;font-weight:400;letter-spacing:0.222px;-webkit-text-stroke:0.5px currentColor;">invoice_information</div>
<div class="t" style="left:1087.70px;top:656.20px;font-size:13px;line-height:15.60px;color:#9c9fa6;font-weight:400;letter-spacing:-0.143px;">no value</div>
<div class="badge" style="left:1315px;top:637px;width:50px;height:22px"></div>
<div class="t" style="left:1321.30px;top:641.40px;font-size:11.5px;line-height:13.80px;color:#b3b9c4;font-weight:400;letter-spacing:0.083px;">4 items</div>
<div class="badge" style="left:1373px;top:637px;width:38px;height:18px;border-radius:7px"></div>
<div class="abs" style="left:1377px;top:639px;width:14px;height:14px;border-radius:50%;background:#8b5cf6;border:1px solid rgba(255,255,255,0.75)"></div>
<svg class="i" viewBox="0 0 24 24" width="12.5" height="12.5" style="left:1394.75px;top:639.75px;color:#9097a2;stroke-width:1.8"><path d="m6 9 6 6 6-6"/></svg>
<div class="btn" style="left:1418px;top:637px;width:36px;height:22px"></div>
<div class="t" style="left:1425.00px;top:642.10px;font-size:11.5px;line-height:13.80px;color:#a0a7b3;font-weight:400;letter-spacing:-0.067px;">Pick</div>
<div class="btn" style="left:1460px;top:636px;width:24px;height:24px"></div>
<svg class="i" viewBox="0 0 24 24" width="14" height="14" style="left:1465.0px;top:641.0px;color:#9aa1ac;stroke-width:2"><path d="M3 6h18"/><path d="M19 6v14c0 1-1 2-2 2H7c-1 0-2-1-2-2V6"/><path d="M8 6V4c0-1 1-2 2-2h4c1 0 2 1 2 2v2"/><path d="M10 11v6"/><path d="M14 11v6"/></svg>
<div class="it" style="left:1085px;top:321px;width:354px"></div>
<div class="t" style="left:1097.80px;top:331.20px;font-size:15px;line-height:18.00px;color:#fff;font-weight:400;letter-spacing:0.038px;-webkit-text-stroke:0.5px currentColor;">company_street</div>
<div class="t" style="left:1098.80px;top:350.20px;font-size:13px;line-height:15.60px;color:#9c9fa6;font-weight:400;letter-spacing:-0.231px;">88 Harbor Road</div>
<div class="btn" style="left:1402px;top:330px;width:24px;height:24px;border-color:#26282c"></div>
<svg class="i" viewBox="0 0 24 24" width="14" height="14" style="left:1407.0px;top:335.0px;color:#9aa1ac;stroke-width:2"><path d="M3 6h18"/><path d="M19 6v14c0 1-1 2-2 2H7c-1 0-2-1-2-2V6"/><path d="M8 6V4c0-1 1-2 2-2h4c1 0 2 1 2 2v2"/><path d="M10 11v6"/><path d="M14 11v6"/></svg>
<div class="it" style="left:1085px;top:381px;width:354px"></div>
<div class="t" style="left:1097.80px;top:391.20px;font-size:15px;line-height:18.00px;color:#fff;font-weight:400;letter-spacing:0.127px;-webkit-text-stroke:0.5px currentColor;">company_city</div>
<div class="t" style="left:1097.80px;top:410.20px;font-size:13px;line-height:15.60px;color:#9c9fa6;font-weight:400;letter-spacing:-0.200px;">Rotterdam</div>
<div class="btn" style="left:1402px;top:390px;width:24px;height:24px;border-color:#26282c"></div>
<svg class="i" viewBox="0 0 24 24" width="14" height="14" style="left:1407.0px;top:395.0px;color:#9aa1ac;stroke-width:2"><path d="M3 6h18"/><path d="M19 6v14c0 1-1 2-2 2H7c-1 0-2-1-2-2V6"/><path d="M8 6V4c0-1 1-2 2-2h4c1 0 2 1 2 2v2"/><path d="M10 11v6"/><path d="M14 11v6"/></svg>
<div class="it" style="left:1085px;top:441px;width:354px"></div>
<div class="t" style="left:1097.80px;top:451.20px;font-size:15px;line-height:18.00px;color:#fff;font-weight:400;letter-spacing:0.157px;-webkit-text-stroke:0.5px currentColor;">company_zipcode</div>
<div class="t" style="left:1097.80px;top:470.20px;font-size:13px;line-height:15.60px;color:#9c9fa6;font-weight:400;letter-spacing:-0.717px;">3011 AA</div>
<div class="btn" style="left:1402px;top:450px;width:24px;height:24px;border-color:#26282c"></div>
<svg class="i" viewBox="0 0 24 24" width="14" height="14" style="left:1407.0px;top:455.0px;color:#9aa1ac;stroke-width:2"><path d="M3 6h18"/><path d="M19 6v14c0 1-1 2-2 2H7c-1 0-2-1-2-2V6"/><path d="M8 6V4c0-1 1-2 2-2h4c1 0 2 1 2 2v2"/><path d="M10 11v6"/><path d="M14 11v6"/></svg>
<div class="it" style="left:1051px;top:689px;width:384px"></div>
<div class="t" style="left:1063.80px;top:699.20px;font-size:15px;line-height:18.00px;color:#fff;font-weight:400;letter-spacing:0.018px;-webkit-text-stroke:0.5px currentColor;">company_name</div>
<div class="t" style="left:1063.80px;top:718.20px;font-size:13px;line-height:15.60px;color:#9c9fa6;font-weight:400;letter-spacing:-0.733px;">LOGITRANS GLOBAL</div>
<div class="btn" style="left:1398px;top:698px;width:24px;height:24px;border-color:#26282c"></div>
<svg class="i" viewBox="0 0 24 24" width="14" height="14" style="left:1403.0px;top:703.0px;color:#9aa1ac;stroke-width:2"><path d="M3 6h18"/><path d="M19 6v14c0 1-1 2-2 2H7c-1 0-2-1-2-2V6"/><path d="M8 6V4c0-1 1-2 2-2h4c1 0 2 1 2 2v2"/><path d="M10 11v6"/><path d="M14 11v6"/></svg>
<div class="it" style="left:1051px;top:751px;width:384px"></div>
<div class="t" style="left:1063.80px;top:761.20px;font-size:15px;line-height:18.00px;color:#fff;font-weight:400;letter-spacing:-0.090px;-webkit-text-stroke:0.5px currentColor;">company_vat</div>
<div class="t" style="left:1063.80px;top:780.20px;font-size:13px;line-height:15.60px;color:#9c9fa6;font-weight:400;letter-spacing:-0.250px;">NL0456123789B01</div>
<div class="btn" style="left:1398px;top:760px;width:24px;height:24px;border-color:#26282c"></div>
<svg class="i" viewBox="0 0 24 24" width="14" height="14" style="left:1403.0px;top:765.0px;color:#9aa1ac;stroke-width:2"><path d="M3 6h18"/><path d="M19 6v14c0 1-1 2-2 2H7c-1 0-2-1-2-2V6"/><path d="M8 6V4c0-1 1-2 2-2h4c1 0 2 1 2 2v2"/><path d="M10 11v6"/><path d="M14 11v6"/></svg>
<div class="it" style="left:1051px;top:813px;width:384px"></div>
<div class="t" style="left:1063.80px;top:823.20px;font-size:15px;line-height:18.00px;color:#fff;font-weight:400;letter-spacing:0.142px;-webkit-text-stroke:0.5px currentColor;">customer_name</div>
<div class="t" style="left:1064.80px;top:842.20px;font-size:13px;line-height:15.60px;color:#9c9fa6;font-weight:400;letter-spacing:-0.173px;">Vandenberg Group</div>
<div class="btn" style="left:1398px;top:822px;width:24px;height:24px;border-color:#26282c"></div>
<svg class="i" viewBox="0 0 24 24" width="14" height="14" style="left:1403.0px;top:827.0px;color:#9aa1ac;stroke-width:2"><path d="M3 6h18"/><path d="M19 6v14c0 1-1 2-2 2H7c-1 0-2-1-2-2V6"/><path d="M8 6V4c0-1 1-2 2-2h4c1 0 2 1 2 2v2"/><path d="M10 11v6"/><path d="M14 11v6"/></svg>
</section>
</main>
</div>
</body>
</html>
